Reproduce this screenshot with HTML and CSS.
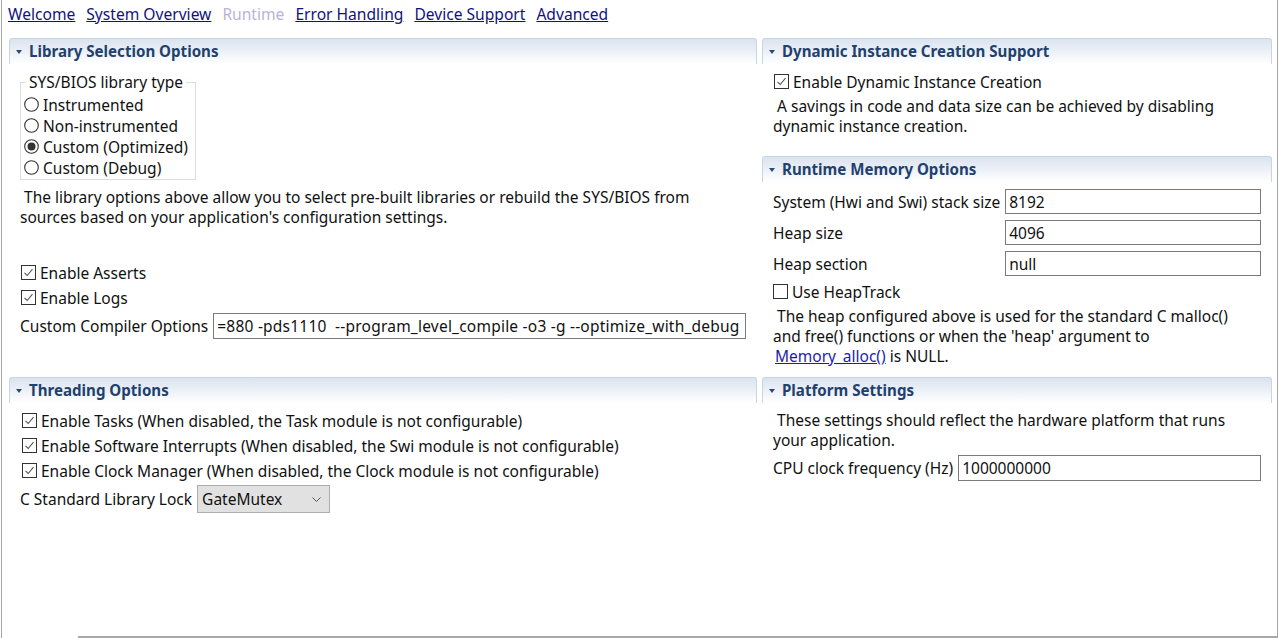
FILE: index.html
```html
<!DOCTYPE html>
<html>
<head>
<meta charset="utf-8">
<link rel="stylesheet" href="styles.css">
</head>
<body>
<div class="frame">
  <nav class="nav">
    <a class="nav-link" href="#">Welcome</a>
    <a class="nav-link" href="#">System Overview</a>
    <a class="nav-link disabled" href="#">Runtime</a>
    <a class="nav-link" href="#">Error Handling</a>
    <a class="nav-link" href="#">Device Support</a>
    <a class="nav-link" href="#">Advanced</a>
  </nav>
  <div class="columns">
    <div class="col col-left">
      <section class="sec">
        <div class="sec-head"><span class="tri"></span>Library Selection Options</div>
        <div class="sec-body">
          <fieldset class="group">
            <legend class="legend">SYS/BIOS library type</legend>
            <div class="radios">
              <div class="radio-row"><svg class="radio" viewBox="0 0 15 15" width="15" height="15"><circle cx="7.5" cy="7.5" r="6.8" fill="#fff" stroke="#333" stroke-width="1.1"/></svg><span>Instrumented</span></div>
              <div class="radio-row"><svg class="radio" viewBox="0 0 15 15" width="15" height="15"><circle cx="7.5" cy="7.5" r="6.8" fill="#fff" stroke="#333" stroke-width="1.1"/></svg><span>Non-instrumented</span></div>
              <div class="radio-row"><svg class="radio" viewBox="0 0 15 15" width="15" height="15"><circle cx="7.5" cy="7.5" r="6.8" fill="#fff" stroke="#333" stroke-width="1.1"/><circle cx="7.5" cy="7.5" r="4" fill="#333"/></svg><span>Custom (Optimized)</span></div>
              <div class="radio-row"><svg class="radio" viewBox="0 0 15 15" width="15" height="15"><circle cx="7.5" cy="7.5" r="6.8" fill="#fff" stroke="#333" stroke-width="1.1"/></svg><span>Custom (Debug)</span></div>
            </div>
          </fieldset>
          <p class="desc desc-lib">&nbsp;The library options above allow you to select pre-built libraries or rebuild the SYS/BIOS from<br>sources based on your application's configuration settings.</p>
          <div class="checks checks-lib">
            <div class="check-row indent1"><svg class="cb" viewBox="0 0 15 15" width="15" height="15"><rect x="0.5" y="0.5" width="14" height="14" fill="#fff" stroke="#333"/><path d="M3.5 7.8 L6.2 10.5 L11.5 4.2" fill="none" stroke="#555" stroke-width="1.1"/></svg><span>Enable Asserts</span></div>
            <div class="check-row indent1"><svg class="cb" viewBox="0 0 15 15" width="15" height="15"><rect x="0.5" y="0.5" width="14" height="14" fill="#fff" stroke="#333"/><path d="M3.5 7.8 L6.2 10.5 L11.5 4.2" fill="none" stroke="#555" stroke-width="1.1"/></svg><span>Enable Logs</span></div>
          </div>
          <div class="field-row compiler-row">
            <label class="field-label">Custom Compiler Options</label>
            <div class="textbox tb-compiler">=880 -pds1110&nbsp; --program_level_compile -o3 -g --optimize_with_debug</div>
          </div>
        </div>
      </section>
      <section class="sec sec-threading">
        <div class="sec-head"><span class="tri"></span>Threading Options</div>
        <div class="sec-body">
          <div class="checks checks-thr">
            <div class="check-row indent2"><svg class="cb" viewBox="0 0 15 15" width="15" height="15"><rect x="0.5" y="0.5" width="14" height="14" fill="#fff" stroke="#333"/><path d="M3.5 7.8 L6.2 10.5 L11.5 4.2" fill="none" stroke="#555" stroke-width="1.1"/></svg><span>Enable Tasks (When disabled, the Task module is not configurable)</span></div>
            <div class="check-row indent2"><svg class="cb" viewBox="0 0 15 15" width="15" height="15"><rect x="0.5" y="0.5" width="14" height="14" fill="#fff" stroke="#333"/><path d="M3.5 7.8 L6.2 10.5 L11.5 4.2" fill="none" stroke="#555" stroke-width="1.1"/></svg><span>Enable Software Interrupts (When disabled, the Swi module is not configurable)</span></div>
            <div class="check-row indent2"><svg class="cb" viewBox="0 0 15 15" width="15" height="15"><rect x="0.5" y="0.5" width="14" height="14" fill="#fff" stroke="#333"/><path d="M3.5 7.8 L6.2 10.5 L11.5 4.2" fill="none" stroke="#555" stroke-width="1.1"/></svg><span>Enable Clock Manager (When disabled, the Clock module is not configurable)</span></div>
          </div>
          <div class="field-row lock-row">
            <label class="field-label">C Standard Library Lock</label>
            <div class="select"><span>GateMutex</span><svg class="chev" viewBox="0 0 9 5" width="9" height="5"><path d="M0.5 0.5 L4.5 4.5 L8.5 0.5" fill="none" stroke="#555" stroke-width="1"/></svg></div>
          </div>
        </div>
      </section>
    </div>
    <div class="col col-right">
      <section class="sec">
        <div class="sec-head"><span class="tri"></span>Dynamic Instance Creation Support</div>
        <div class="sec-body">
          <div class="check-row dyn-row indent1"><svg class="cb" viewBox="0 0 15 15" width="15" height="15"><rect x="0.5" y="0.5" width="14" height="14" fill="#fff" stroke="#333"/><path d="M3.5 7.8 L6.2 10.5 L11.5 4.2" fill="none" stroke="#555" stroke-width="1.1"/></svg><span>Enable Dynamic Instance Creation</span></div>
          <p class="desc desc-dyn">&nbsp;A savings in code and data size can be achieved by disabling<br>dynamic instance creation.</p>
        </div>
      </section>
      <section class="sec sec-mem">
        <div class="sec-head"><span class="tri"></span>Runtime Memory Options</div>
        <div class="sec-body">
          <div class="mem-grid">
            <label class="field-label">System (Hwi and Swi) stack size</label>
            <div class="textbox tb-mem">8192</div>
            <label class="field-label">Heap size</label>
            <div class="textbox tb-mem">4096</div>
            <label class="field-label">Heap section</label>
            <div class="textbox tb-mem">null</div>
          </div>
          <div class="check-row heap-row"><svg class="cb" viewBox="0 0 15 15" width="15" height="15"><rect x="0.5" y="0.5" width="14" height="14" fill="#fff" stroke="#333"/></svg><span>Use HeapTrack</span></div>
          <p class="desc desc-heap">&nbsp;The heap configured above is used for the standard C malloc()<br>and free() functions or when the 'heap' argument to<br><a class="doc-link" href="#">Memory_alloc()</a> is NULL.</p>
        </div>
      </section>
      <section class="sec sec-plat">
        <div class="sec-head"><span class="tri"></span>Platform Settings</div>
        <div class="sec-body">
          <p class="desc desc-plat">&nbsp;These settings should reflect the hardware platform that runs<br>your application.</p>
          <div class="field-row cpu-row">
            <label class="field-label">CPU clock frequency (Hz)</label>
            <div class="textbox">1000000000</div>
          </div>
        </div>
      </section>
    </div>
  </div>
  <div class="bottom-bar"></div>
</div>
</body>
</html>
```

FILE: styles.css
```css
html, body {
  margin: 0;
  padding: 0;
  background: #fff;
}
body {
  font-family: "Noto Sans", "Open Sans", sans-serif;
  font-size: 15.5px;
  color: #111;
}
.frame {
  margin-left: 1px;
  width: 1277px;
  height: 638px;
  box-sizing: border-box;
  border-left: 1px solid #a6a6a6;
  border-right: 1px solid #a6a6a6;
  display: flex;
  flex-direction: column;
}
.nav {
  display: flex;
  align-items: center;
  gap: 11px;
  height: 30px;
  box-sizing: border-box;
  padding-left: 6px;
  padding-bottom: 2px;
  font-size: 15.6px;
}
.nav-link {
  color: #12127e;
  text-decoration: underline;
}
.nav-link.disabled {
  color: #b8b4d8;
  text-decoration: none;
}
.columns {
  display: flex;
  gap: 5px;
  padding-left: 7px;
  margin-top: 8px;
  flex: 1;
}
.col-left { width: 748px; }
.col-right { width: 510px; }
.sec-head {
  height: 26px;
  box-sizing: border-box;
  border: 1px solid #c7d5e6;
  border-bottom: none;
  border-radius: 3px 3px 0 0;
  background: linear-gradient(#dae3ef, #ffffff);
  display: flex;
  align-items: center;
  padding-left: 6px;
  padding-bottom: 2px;
  font-weight: bold;
  font-size: 15.1px;
  color: #1f416e;
}
.tri {
  width: 0;
  height: 0;
  border-left: 3.5px solid transparent;
  border-right: 3.5px solid transparent;
  border-top: 4px solid #2a4a76;
  margin-right: 7px;
  margin-top: 2px;
}
.sec-body {
  padding: 0 11px;
}
.group {
  margin: 8px 0 0 0;
  width: 176px;
  box-sizing: border-box;
  border: 1px solid #dcdcdc;
  padding: 0 3px 1px 3px;
}
.legend {
  padding: 0 3px;
  margin-left: 2px;
  line-height: 20px;
}
.radios { padding-top: 2px; }
.radio-row {
  display: flex;
  align-items: center;
  gap: 4px;
  height: 21px;
  white-space: nowrap;
}
.radio { flex: none; }
.desc {
  margin: 0;
  line-height: 20px;
}
.desc-lib { margin-top: 7px; }
.checks-lib { margin-top: 33px; }
.check-row {
  display: flex;
  align-items: center;
  gap: 4px;
  height: 25px;
  white-space: nowrap;
}
.cb { flex: none; }
.indent1 .cb { margin-left: 1px; }
.indent2 .cb { margin-left: 2px; }
.field-row {
  display: flex;
  align-items: center;
  gap: 5px;
}
.field-label { white-space: nowrap; }
.compiler-row { margin-top: 3px; }
.textbox {
  flex: 1;
  height: 26px;
  box-sizing: border-box;
  border: 1px solid #7a7a7a;
  padding: 0 3px;
  display: flex;
  align-items: center;
  white-space: nowrap;
  overflow: hidden;
  background: #fff;
}
.tb-compiler { letter-spacing: 0.22px; }
.sec-threading { margin-top: 38px; }
.checks-thr { margin-top: 5px; }
.lock-row { margin-top: 2px; }
.select {
  width: 133px;
  height: 28px;
  box-sizing: border-box;
  background: #e1e1e1;
  border: 1px solid #adadad;
  display: flex;
  align-items: center;
  justify-content: space-between;
  padding: 0 8px 0 4px;
}
.dyn-row { margin-top: 5px; }
.desc-dyn { margin-top: 2px; }
.sec-mem { margin-top: 20px; }
.mem-grid {
  margin-top: 7px;
  display: grid;
  grid-template-columns: auto 1fr;
  column-gap: 5px;
  row-gap: 6px;
  align-items: center;
}
.tb-mem { height: 25px; }
.heap-row { margin-top: 3px; }
.desc-heap { margin-top: 2px; }
.doc-link {
  color: #1d1db0;
  text-decoration: underline;
  margin-left: 2px;
}
.sec-plat { margin-top: 11px; }
.desc-plat { margin-top: 7px; }
.cpu-row { margin-top: 5px; }
.bottom-bar {
  margin-left: 76px;
  height: 2px;
  background: #a8a8a8;
}
```
